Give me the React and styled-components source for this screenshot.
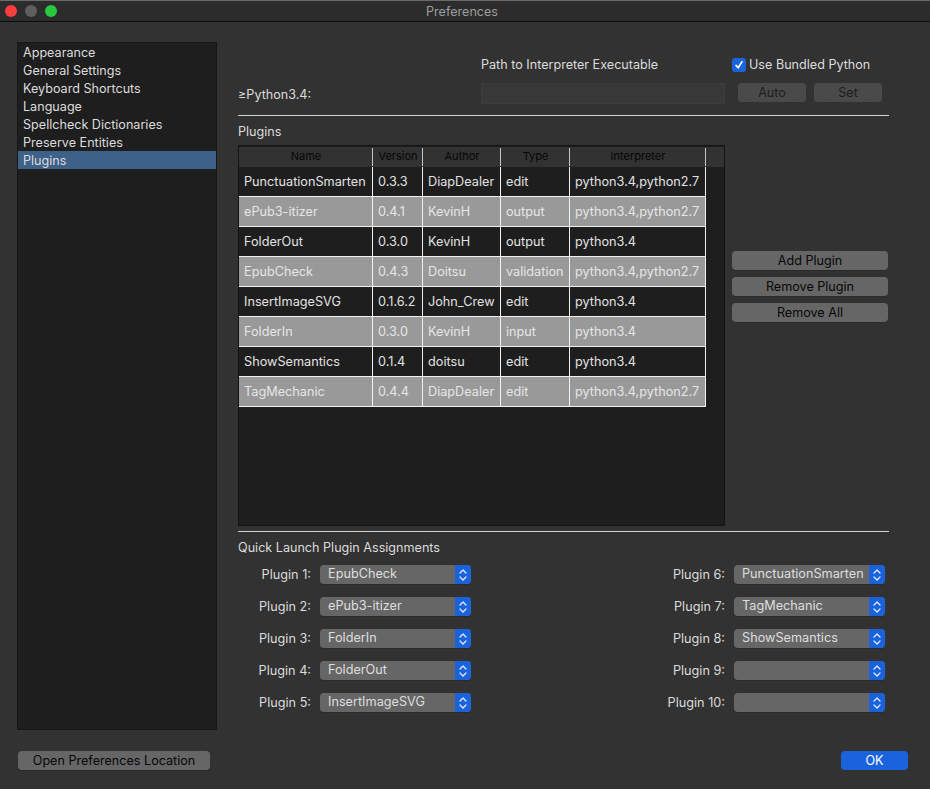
import React from 'react';
import styled, { createGlobalStyle } from 'styled-components';

const navItems = [
  'Appearance',
  'General Settings',
  'Keyboard Shortcuts',
  'Language',
  'Spellcheck Dictionaries',
  'Preserve Entities',
  'Plugins',
];

const columns = ['Name', 'Version', 'Author', 'Type', 'Interpreter'];

const plugins = [
  ['PunctuationSmarten', '0.3.3', 'DiapDealer', 'edit', 'python3.4,python2.7'],
  ['ePub3-itizer', '0.4.1', 'KevinH', 'output', 'python3.4,python2.7'],
  ['FolderOut', '0.3.0', 'KevinH', 'output', 'python3.4'],
  ['EpubCheck', '0.4.3', 'Doitsu', 'validation', 'python3.4,python2.7'],
  ['InsertImageSVG', '0.1.6.2', 'John_Crew', 'edit', 'python3.4'],
  ['FolderIn', '0.3.0', 'KevinH', 'input', 'python3.4'],
  ['ShowSemantics', '0.1.4', 'doitsu', 'edit', 'python3.4'],
  ['TagMechanic', '0.4.4', 'DiapDealer', 'edit', 'python3.4,python2.7'],
];

const leftAssignments = [
  ['Plugin 1:', 'EpubCheck'],
  ['Plugin 2:', 'ePub3-itizer'],
  ['Plugin 3:', 'FolderIn'],
  ['Plugin 4:', 'FolderOut'],
  ['Plugin 5:', 'InsertImageSVG'],
];

const rightAssignments = [
  ['Plugin 6:', 'PunctuationSmarten'],
  ['Plugin 7:', 'TagMechanic'],
  ['Plugin 8:', 'ShowSemantics'],
  ['Plugin 9:', ''],
  ['Plugin 10:', ''],
];

const GlobalStyle = createGlobalStyle`
  html, body {
    margin: 0;
    padding: 0;
    background: #323232;
  }
  * {
    box-sizing: border-box;
  }
`;

const Window = styled.div`
  width: 930px;
  height: 789px;
  overflow: hidden;
  display: flex;
  flex-direction: column;
  background: #323232;
  color: #dcdcdc;
  font-family: Inter, 'Liberation Sans', sans-serif;
  font-size: 12.6px;
  line-height: 16px;
`;

const TitleBar = styled.header`
  position: relative;
  height: 22px;
  flex: none;
  display: flex;
  align-items: center;
  justify-content: center;
  padding: 2px 6px 0 0;
  background: #2c2c2c;
  border-top: 1px solid #6a6a6a;
  border-bottom: 1px solid #0c0c0c;
  color: #9c9c9c;
`;

const Lights = styled.div`
  position: absolute;
  left: 5px;
  top: 4px;
  display: flex;
  gap: 8px;
`;

const Light = styled.span`
  width: 12px;
  height: 12px;
  border-radius: 50%;
  background: ${(p) => p.$color};
`;

const Body = styled.div`
  display: flex;
  gap: 21px;
  padding: 20px 0 0 17px;
`;

const Sidebar = styled.nav`
  width: 200px;
  height: 688px;
  flex: none;
  background: #1e1e1e;
  border: 1px solid #171717;
`;

const NavItem = styled.div`
  height: 18px;
  padding-left: 5px;
  line-height: 20px;
  color: #dcdcdc;
  background: ${(p) => (p.$active ? '#3e6189' : 'transparent')};
`;

const Main = styled.main`
  width: 651px;
  flex: none;
`;

const InterpreterGrid = styled.section`
  display: grid;
  grid-template-columns: 243px 244px 1fr;
  grid-template-rows: 16px 21px;
  row-gap: 10px;
  padding-top: 15px;
  padding-bottom: 11px;
  border-bottom: 1px solid #d2d2d2;
`;

const PathLabel = styled.div`
  grid-column: 2;
`;

const BundledCheck = styled.label`
  display: flex;
  align-items: center;
  gap: 3px;
  padding-left: 7px;
`;

const CheckBox = styled.span`
  width: 14px;
  height: 14px;
  display: flex;
  align-items: center;
  justify-content: center;
  border-radius: 3px;
  background: #1b63dc;
`;

const PythonLabel = styled.div`
  align-self: end;
  line-height: 18px;
`;

const PathInput = styled.div`
  background: #383838;
  border: 1px solid #3d3d3d;
`;

const ButtonPair = styled.div`
  display: flex;
  gap: 8px;
  padding-left: 13px;
`;

const DisabledButton = styled.button`
  width: 68px;
  height: 19px;
  padding: 0;
  border: none;
  border-radius: 4px;
  background: #4a4a4a;
  color: #1e1e1e;
  font: inherit;
`;

const SectionTitle = styled.h2`
  margin: 0;
  padding: 8px 0 5px;
  font: inherit;
  color: #dcdcdc;
`;

const TableRow = styled.section`
  display: flex;
  gap: 7px;
`;

const TableFrame = styled.div`
  width: 487px;
  height: 381px;
  flex: none;
  padding-top: 1px;
  background: #1e1e1e;
  border: 1px solid #141414;
`;

const HeaderRow = styled.div`
  display: grid;
  grid-template-columns: 134px 50px 78px 69px 136px 1fr;
  height: 20px;
  background: #323232;
`;

const HeaderCell = styled.div`
  position: relative;
  text-align: center;
  line-height: 18px;
  font-size: 11px;
  color: #060606;

  &::after {
    content: '';
    position: absolute;
    right: 0;
    top: 1px;
    bottom: 1px;
    width: 1px;
    background: ${(p) => (p.$bare ? 'transparent' : '#c4c4c4')};
  }
`;

const PluginRow = styled.div`
  display: grid;
  grid-template-columns: 134px 50px 78px 69px 136px;
  width: 467px;
  height: 30px;
  border-bottom: 1px solid #f2f2f2;
  font-size: 12.7px;
  background: ${(p) => (p.$alt ? '#999999' : '#1e1e1e')};
  color: ${(p) => (p.$alt ? '#e6e6e6' : '#e2e2e2')};
`;

const PluginCell = styled.div`
  padding-left: 5px;
  line-height: 29px;
  white-space: nowrap;
  overflow: hidden;
  border-right: 1px solid #f2f2f2;
`;

const SideButtons = styled.div`
  display: flex;
  flex-direction: column;
  gap: 7px;
  padding-top: 106px;
`;

const GreyButton = styled.button`
  width: ${(p) => p.$width || '156px'};
  height: 19px;
  flex: none;
  padding: 0;
  border: none;
  border-radius: 4px;
  background: #666666;
  box-shadow: 0 1px 0 #2a2a2a;
  color: #060606;
  font: inherit;
`;

const Assignments = styled.section`
  margin-top: 5px;
  border-top: 1px solid #d2d2d2;
`;

const AssignmentColumns = styled.div`
  display: flex;
  padding-top: 4px;
`;

const AssignmentColumn = styled.div`
  width: ${(p) => p.$width};
  flex: none;
  display: flex;
  flex-direction: column;
  gap: 13px;
`;

const AssignmentRow = styled.div`
  display: flex;
  align-items: center;
  justify-content: flex-end;
  gap: 9px;
  font-size: 12.7px;
`;

const SelectBox = styled.div`
  width: 151px;
  height: 19px;
  flex: none;
  display: flex;
  border-radius: 4px;
  overflow: hidden;
  background: #666666;
  box-shadow: 0 1px 0 #2a2a2a;
`;

const SelectText = styled.span`
  flex: 1;
  padding-left: 8px;
  line-height: 17px;
  color: #dedede;
  white-space: nowrap;
  overflow: hidden;
`;

const SelectArrow = styled.span`
  width: 16px;
  flex: none;
  display: flex;
  align-items: center;
  justify-content: center;
  background: #1b63dc;
`;

const Footer = styled.footer`
  display: flex;
  justify-content: space-between;
  padding: 21px 22px 0 18px;
`;

const OkButton = styled.button`
  width: 67px;
  height: 19px;
  padding: 0;
  border: none;
  border-radius: 4px;
  background: #1b63dc;
  color: #ffffff;
  font: inherit;
`;

const Chevrons = () => (
  <svg width="10" height="14" viewBox="0 0 10 14" fill="none" stroke="#e8eefa" strokeWidth="1.2" strokeLinecap="round" strokeLinejoin="round">
    <path d="M2 5l3-3 3 3" />
    <path d="M2 9l3 3 3-3" />
  </svg>
);

const Assignment = ({ label, value }) => (
  <AssignmentRow>
    <span>{label}</span>
    <SelectBox>
      <SelectText>{value}</SelectText>
      <SelectArrow>
        <Chevrons />
      </SelectArrow>
    </SelectBox>
  </AssignmentRow>
);

const App = () => {
  return (
    <Window>
      <GlobalStyle />
      <TitleBar>
        <Lights>
          <Light $color="#fc3d3d" />
          <Light $color="#5e5e5e" />
          <Light $color="#28c93f" />
        </Lights>
        Preferences
      </TitleBar>
      <Body>
        <Sidebar>
          {navItems.map((item) => (
            <NavItem key={item} $active={item === 'Plugins'}>
              {item}
            </NavItem>
          ))}
        </Sidebar>
        <Main>
          <InterpreterGrid>
            <PathLabel>Path to Interpreter Executable</PathLabel>
            <BundledCheck>
              <CheckBox>
                <svg width="10" height="10" viewBox="0 0 10 10" fill="none" stroke="#fff" strokeWidth="1.6" strokeLinecap="round" strokeLinejoin="round">
                  <path d="M2 5.4l2.2 2.4L8 1.8" />
                </svg>
              </CheckBox>
              Use Bundled Python
            </BundledCheck>
            <PythonLabel>≥Python3.4:</PythonLabel>
            <PathInput />
            <ButtonPair>
              <DisabledButton>Auto</DisabledButton>
              <DisabledButton>Set</DisabledButton>
            </ButtonPair>
          </InterpreterGrid>
          <SectionTitle>Plugins</SectionTitle>
          <TableRow>
            <TableFrame>
              <HeaderRow>
                {columns.map((name) => (
                  <HeaderCell key={name}>{name}</HeaderCell>
                ))}
                <HeaderCell $bare />
              </HeaderRow>
              {plugins.map((row, i) => (
                <PluginRow key={row[0]} $alt={i % 2 === 1}>
                  {row.map((cell) => (
                    <PluginCell key={cell}>{cell}</PluginCell>
                  ))}
                </PluginRow>
              ))}
            </TableFrame>
            <SideButtons>
              <GreyButton>Add Plugin</GreyButton>
              <GreyButton>Remove Plugin</GreyButton>
              <GreyButton>Remove All</GreyButton>
            </SideButtons>
          </TableRow>
          <Assignments>
            <SectionTitle>Quick Launch Plugin Assignments</SectionTitle>
            <AssignmentColumns>
              <AssignmentColumn $width="233px">
                {leftAssignments.map(([label, value]) => (
                  <Assignment key={label} label={label} value={value} />
                ))}
              </AssignmentColumn>
              <AssignmentColumn $width="414px">
                {rightAssignments.map(([label, value]) => (
                  <Assignment key={label} label={label} value={value} />
                ))}
              </AssignmentColumn>
            </AssignmentColumns>
          </Assignments>
        </Main>
      </Body>
      <Footer>
        <GreyButton $width="192px">Open Preferences Location</GreyButton>
        <OkButton>OK</OkButton>
      </Footer>
    </Window>
  );
};

export default App;
